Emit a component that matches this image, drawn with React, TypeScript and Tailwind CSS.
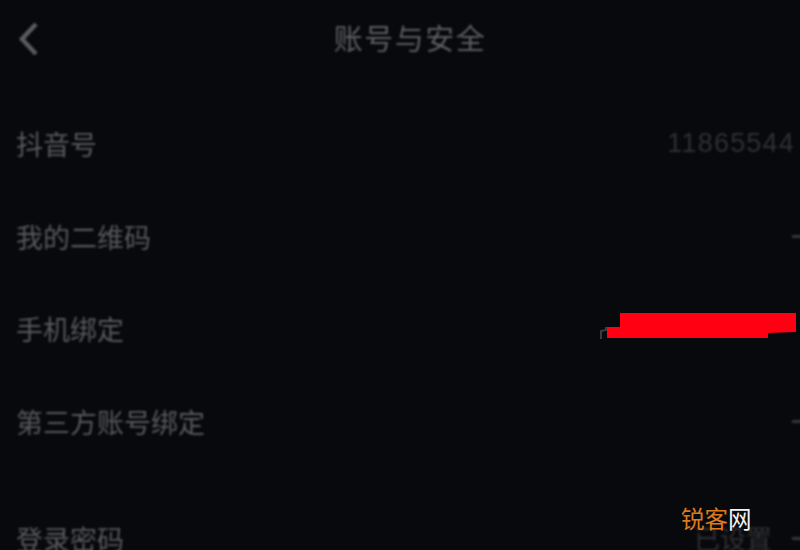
const cjk = "font-['Noto_Sans_CJK_SC','Noto_Sans',sans-serif]";

const rows = [
  { label: "抖音号", value: "11865544", chevron: false },
  { label: "我的二维码", value: "", chevron: true },
  { label: "手机绑定", value: "", chevron: false },
  { label: "第三方账号绑定", value: "", chevron: true },
];

function Row({ label, value, chevron }: { label: string; value: string; chevron: boolean }) {
  return (
    <div className="flex h-[92.8px] shrink-0 items-center justify-between pl-4">
      <span className="text-[27px] leading-none text-[#59595d] blur-[1.2px]">{label}</span>
      {value && (
        <span className="mr-[5px] text-[27px] leading-none tracking-[1.2px] text-[#303034] blur-[1.2px] font-['Liberation_Sans',sans-serif]">
          {value}
        </span>
      )}
      {chevron && <span className="mr-[-8px] h-[3px] w-4 bg-[#36363a] blur-[1px]" />}
    </div>
  );
}

export default function App() {
  return (
    <div className={`relative h-[550px] w-[800px] overflow-hidden bg-[#08090d] ${cjk}`}>
      <header className="flex h-[74px] items-center justify-center pl-5">
        <svg className="absolute left-[14px] top-[20px] blur-[0.8px]" width="28" height="38" viewBox="0 0 28 38" fill="none">
          <path d="M22 4 L8 19 L22 34" stroke="#5c5c60" strokeWidth="4.5" />
        </svg>
        <h1 className="text-[29px] font-normal leading-none tracking-[1.5px] text-[#5e5e62] blur-[1.2px]">账号与安全</h1>
      </header>

      <div className="mt-[23px]">
        {rows.map((row) => (
          <Row key={row.label} {...row} />
        ))}
      </div>

      <div className="mt-[24px] flex h-[92px] items-center justify-between pl-4">
        <span className="text-[27px] leading-none text-[#59595d] blur-[1.2px]">登录密码</span>
        <div className="flex items-center gap-5">
          <span className="text-[26px] leading-none text-[#303034] blur-[1.2px]">已设置</span>
          <span className="mr-[-8px] h-[3px] w-4 bg-[#36363a] blur-[1px]" />
        </div>
      </div>

      {/* redacted phone number */}
      <svg className="absolute left-[596px] top-[308px] blur-[0.7px]" width="204" height="36" viewBox="0 0 204 36" fill="none">
        <path d="M5 31 V23 L10 22 V19" stroke="#3a3d38" strokeWidth="2" />
        <path d="M24 5 H200 V24 L172 25 V30 H11 V19 H24 Z" fill="#ff0012" />
      </svg>

      <div className="absolute left-[681px] top-[503px] text-[23.5px] leading-[30px] whitespace-nowrap">
        <span className="text-[#de7a1c]">锐客</span>
        <span className="text-[#f2f2f2]">网</span>
      </div>
    </div>
  );
}
